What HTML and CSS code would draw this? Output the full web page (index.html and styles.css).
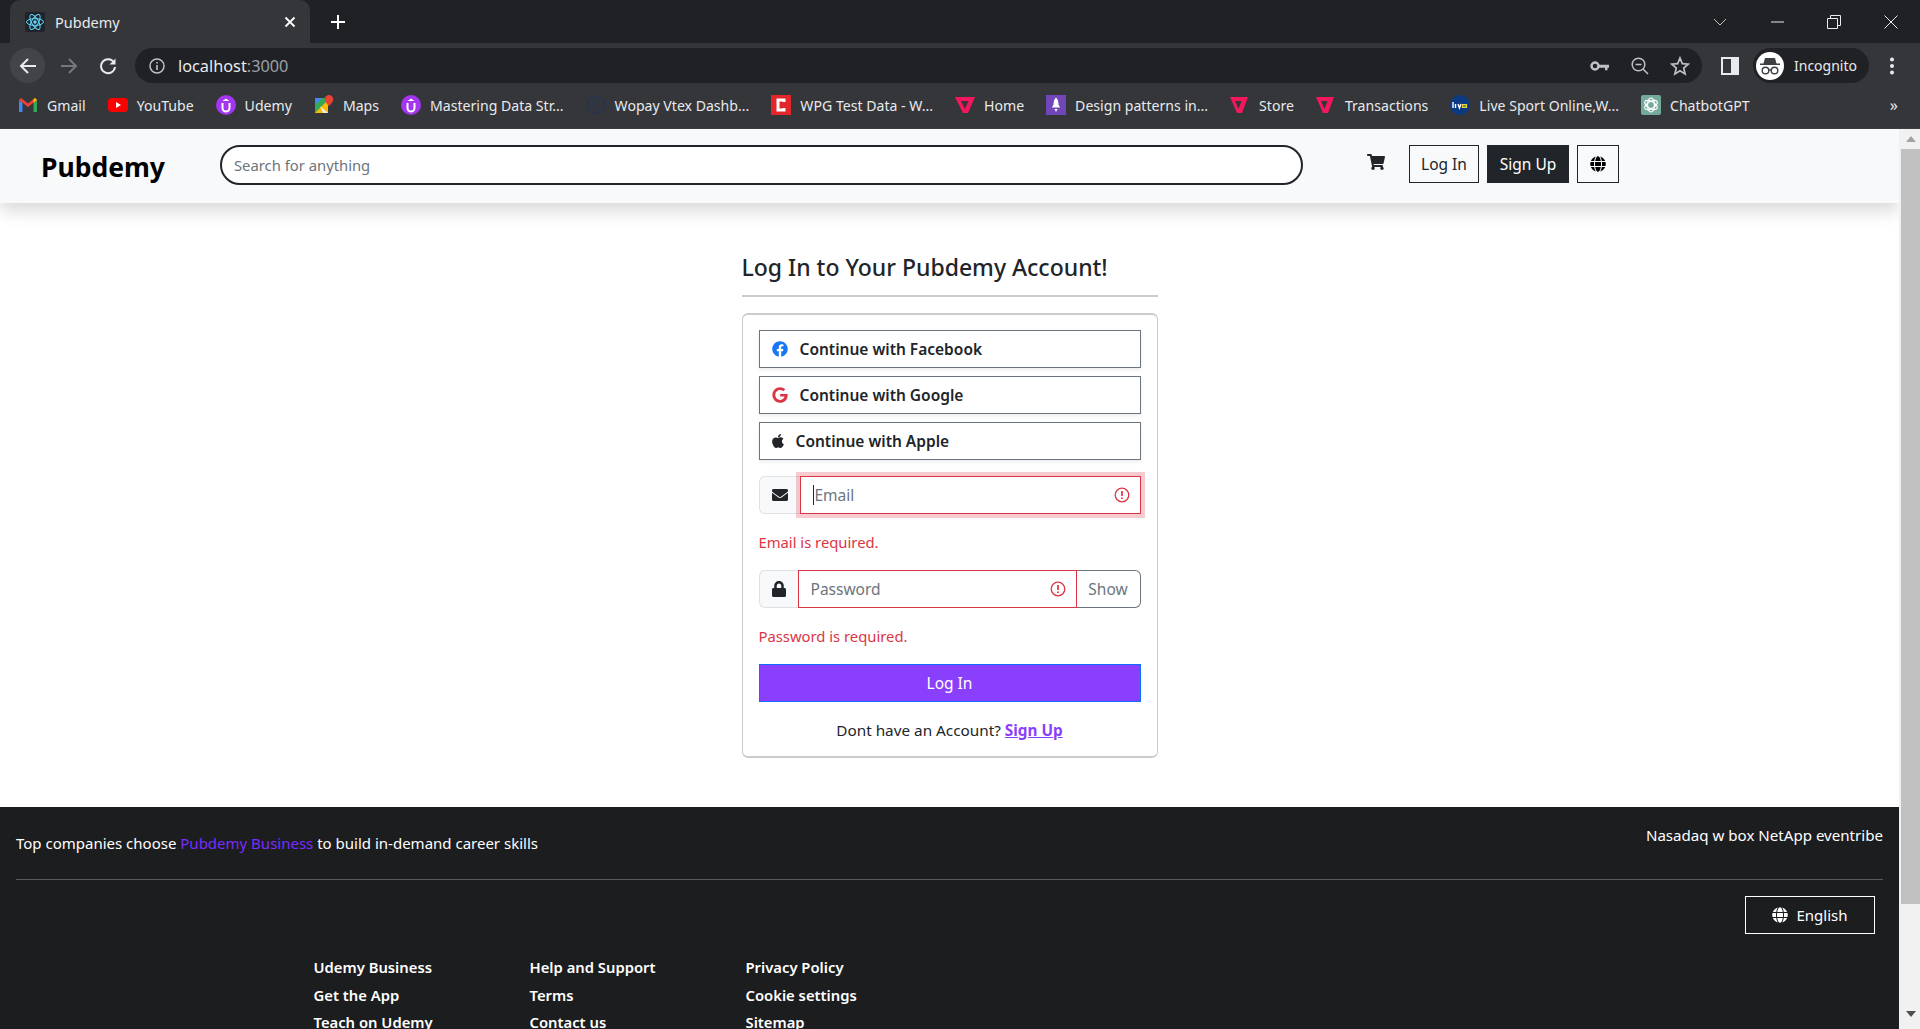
FILE: index.html
```html
<!doctype html>
<html>
  <head>
    <meta charset="UTF-8">
    <title>Pubdemy</title>
    <link rel="stylesheet" href="styles.css">
  </head>
  <body>
    <div class="tabstrip">
      <div class="tab">
        <span class="favicon">
          <svg viewBox="0 0 20 20" width="20" height="20"><rect width="20" height="20" rx="2" fill="#20232a"/><g fill="none" stroke="#61dafb" stroke-width="1"><ellipse cx="10" cy="10" rx="8.5" ry="3.4"/><ellipse cx="10" cy="10" rx="8.5" ry="3.4" transform="rotate(60 10 10)"/><ellipse cx="10" cy="10" rx="8.5" ry="3.4" transform="rotate(120 10 10)"/></g><circle cx="10" cy="10" r="1.7" fill="#61dafb"/></svg>
        </span>
        <span class="tab-title">Pubdemy</span>
        <svg class="tab-close" viewBox="0 0 12 12" width="12" height="12"><path d="M1.5 1.5l9 9M10.5 1.5l-9 9" stroke="#fff" stroke-width="1.8"/></svg>
      </div>
      <svg class="new-tab" viewBox="0 0 16 16" width="16" height="16"><path d="M8 1v14M1 8h14" stroke="#fff" stroke-width="2"/></svg>
      <div class="window-btns">
        <svg viewBox="0 0 14 14" width="14" height="14"><path d="M1 4l6 6 6-6" fill="none" stroke="#c4c7c5" stroke-width="1"/></svg>
        <svg viewBox="0 0 14 14" width="14" height="14"><path d="M1 7h13" stroke="#e8eaed" stroke-width="1"/></svg>
        <svg viewBox="0 0 14 14" width="14" height="14"><path d="M.5 3.5h10v10H.5zM3.500 3.500V.5h10v10h-3" fill="none" stroke="#e8eaed" stroke-width="1"/></svg>
        <svg viewBox="0 0 14 14" width="14" height="14"><path d="M.5.5l13 13M13.500.5l-13 13" stroke="#e8eaed" stroke-width="1"/></svg>
      </div>
    </div>

    <div class="toolbar">
      <span class="nav-btn back">
        <svg viewBox="0 0 18 18" width="18" height="18"><path d="M17 9H2.500M9 2L2 9l7 7" fill="none" stroke="#e8eaed" stroke-width="2"/></svg>
      </span>
      <span class="nav-btn">
        <svg viewBox="0 0 18 18" width="18" height="18"><path d="M1 9h14.500M9 2l7 7-7 7" fill="none" stroke="#75777a" stroke-width="2"/></svg>
      </span>
      <span class="nav-btn">
        <svg viewBox="0 0 18 18" width="18" height="18"><path d="M15.300 6A7 7 0 1 0 16 10" fill="none" stroke="#e8eaed" stroke-width="2"/><path d="M16.500 1.500v6h-6z" fill="#e8eaed"/></svg>
      </span>
      <div class="address">
        <svg class="addr-info" viewBox="0 0 16 16" width="16" height="16"><circle cx="8" cy="8" r="7" fill="none" stroke="#bdc1c6" stroke-width="1.500"/><path d="M8 7v5M8 4v1.600" stroke="#bdc1c6" stroke-width="1.600"/></svg>
        <span class="url">localhost<span class="url-port">:3000</span></span>
        <div class="addr-tools">
          <svg viewBox="0 0 20 12" width="20" height="12"><circle cx="5" cy="6" r="3.500" fill="none" stroke="#bdc1c6" stroke-width="2.500"/><path d="M8 4.700h11v3h-1.500v2.500h-2.500V7.700h-7z" fill="#bdc1c6"/></svg>
          <svg viewBox="0 0 18 18" width="18" height="18"><circle cx="7.500" cy="7.500" r="6.300" fill="none" stroke="#bdc1c6" stroke-width="1.500"/><path d="M4.500 7.500h6M12 12l5 5" stroke="#bdc1c6" stroke-width="1.500"/></svg>
          <svg viewBox="0 0 20 20" width="20" height="20"><path d="M10 2l2.300 5.600 6 .5-4.600 3.900 1.400 5.900L10 14.800l-5.100 3.100 1.400-5.900L1.700 8.100l6-.5z" fill="none" stroke="#bdc1c6" stroke-width="1.700"/></svg>
        </div>
      </div>
      <svg class="side-panel" viewBox="0 0 18 18" width="18" height="18"><path fill="#e8eaed" fill-rule="evenodd" d="M0 0h18v18H0zM2 2v14h8V2z"/></svg>
      <div class="profile">
        <span class="avatar">
          <svg viewBox="0 0 28 28" width="28" height="28"><circle cx="14" cy="14" r="14" fill="#fff"/><path d="M9 6h10l1.500 5.500H24V13H4v-1.500h3.500z" fill="#3c4043"/><g fill="none" stroke="#3c4043" stroke-width="1.400"><circle cx="9.500" cy="18.500" r="3.300"/><circle cx="18.500" cy="18.500" r="3.300"/><path d="M12.800 18h2.400"/></g></svg>
        </span>
        <span class="profile-name">Incognito</span>
      </div>
      <svg class="menu-dots" viewBox="0 0 4 18" width="4" height="18"><circle cx="2" cy="2.500" r="2" fill="#e8eaed"/><circle cx="2" cy="9" r="2" fill="#e8eaed"/><circle cx="2" cy="15.500" r="2" fill="#e8eaed"/></svg>
    </div>

    <div class="bookmarks">
      <span class="bm">
        <svg viewBox="0 0 20 20" width="20" height="20"><path d="M1 5v12h3.500V8z" fill="#4285f4"/><path d="M19 5v12h-3.500V8z" fill="#34a853"/><path d="M1 5l9 7 9-7-2-2-7 5.500L3 3z" fill="#ea4335"/><path d="M15.500 8L19 5l-2-2-1.500 1.200z" fill="#fbbc04"/></svg>
        Gmail
      </span>
      <span class="bm">
        <svg viewBox="0 0 20 20" width="20" height="20"><rect y="3" width="20" height="14" rx="4" fill="#f00"/><path d="M8 7l5 3-5 3z" fill="#fff"/></svg>
        YouTube
      </span>
      <span class="bm">
        <svg viewBox="0 0 20 20" width="20" height="20"><circle cx="10" cy="10" r="10" fill="#a435f0"/><path d="M6.500 8v5a3.500 3.500 0 0 0 7 0V8" fill="none" stroke="#fff" stroke-width="2"/><path d="M10 3.500L6.500 6h7z" fill="#fff"/></svg>
        Udemy
      </span>
      <span class="bm">
        <svg viewBox="0 0 20 20" width="20" height="20"><path d="M1 3h13v15H1z" fill="#34a853"/><path d="M1 18L14 5v13z" fill="#fbbc04"/><path d="M1 3h7L1 10z" fill="#4285f4"/><path d="M6 11l8 7H9z" fill="#e8eaed"/><path d="M15 0a4.200 4.200 0 0 0-4.200 4.200C10.800 7 15 11 15 11s4.200-4 4.200-6.800A4.200 4.200 0 0 0 15 0z" fill="#ea4335"/></svg>
        Maps
      </span>
      <span class="bm">
        <svg viewBox="0 0 20 20" width="20" height="20"><circle cx="10" cy="10" r="10" fill="#a435f0"/><path d="M6.500 8v5a3.500 3.500 0 0 0 7 0V8" fill="none" stroke="#fff" stroke-width="2"/><path d="M10 3.500L6.500 6h7z" fill="#fff"/></svg>
        Mastering Data Str...
      </span>
      <span class="bm">
        <svg viewBox="0 0 20 20" width="20" height="20"><path d="M10 1l8 4.500v9L10 19l-8-4.500v-9z" fill="none" stroke="#27344f" stroke-width="1.500"/><path d="M13 7a4 4 0 1 0 0 6" fill="none" stroke="#27344f" stroke-width="1.500"/></svg>
        Wopay Vtex Dashb...
      </span>
      <span class="bm">
        <svg viewBox="0 0 20 20" width="20" height="20"><rect width="20" height="20" fill="#e2262b"/><path d="M13 7V5h-6v10h6v-2" fill="none" stroke="#fff" stroke-width="3"/></svg>
        WPG Test Data - W...
      </span>
      <span class="bm">
        <svg viewBox="0 0 20 20" width="20" height="20"><path d="M0 2h20l-7 16H8zM6 6l4 8 3.500-8z" fill="#f5175e" fill-rule="evenodd"/></svg>
        Home
      </span>
      <span class="bm">
        <svg viewBox="0 0 20 20" width="20" height="20"><rect width="20" height="20" fill="#7046b8"/><path d="M10 2.500c2 2 2.500 4.500 2.500 7l1.500 3H6l1.500-3c0-2.500.5-5 2.500-7z" fill="#fff"/><path d="M8.500 14h3L10 17z" fill="#fff"/></svg>
        Design patterns in...
      </span>
      <span class="bm">
        <svg viewBox="0 0 20 20" width="20" height="20"><path d="M0 2h18l-6 16H7zM5 6l3.500 8 3-8z" fill="#f5175e" fill-rule="evenodd"/></svg>
        Store
      </span>
      <span class="bm">
        <svg viewBox="0 0 20 20" width="20" height="20"><path d="M0 2h18l-6 16H7zM5 6l3.500 8 3-8z" fill="#f5175e" fill-rule="evenodd"/></svg>
        Transactions
      </span>
      <span class="bm">
        <svg viewBox="0 0 20 20" width="20" height="20"><circle cx="10" cy="10" r="10" fill="#0b3a82"/><path d="M3 7v6M5.500 9v4M8 9l1.500 4L11 9" fill="none" stroke="#fff" stroke-width="1.400"/><path d="M12.500 11h4.500M12.500 9.500h4v3h-4z" fill="none" stroke="#e6d23a" stroke-width="1.200"/></svg>
        Live Sport Online,W...
      </span>
      <span class="bm">
        <svg viewBox="0 0 20 20" width="20" height="20"><rect width="20" height="20" rx="2" fill="#74aa9c"/><g fill="none" stroke="#fff" stroke-width="1.200"><ellipse cx="10" cy="10" rx="7" ry="3.500" transform="rotate(30 10 10)"/><ellipse cx="10" cy="10" rx="7" ry="3.500" transform="rotate(90 10 10)"/><ellipse cx="10" cy="10" rx="7" ry="3.500" transform="rotate(150 10 10)"/></g></svg>
        ChatbotGPT
      </span>
      <span class="bm-more">»</span>
    </div>

    <div class="page">
      <div class="main">
        <nav class="navbar">
          <a class="brand">Pubdemy</a>
          <input class="search" placeholder="Search for anything">
          <svg class="cart" viewBox="0 0 576 512" width="18" height="16"><path d="M528.12 301.319l47.273-208C578.806 78.301 567.391 64 551.99 64H159.208l-9.166-44.81C147.758 8.021 137.93 0 126.529 0H24C10.745 0 0 10.745 0 24v16c0 13.255 10.745 24 24 24h69.883l70.248 343.435C147.325 417.1 136 435.222 136 456c0 30.928 25.072 56 56 56s56-25.072 56-56c0-15.674-6.447-29.835-16.824-40h209.647C430.447 426.165 424 440.326 424 456c0 30.928 25.072 56 56 56s56-25.072 56-56c0-22.172-12.888-41.332-31.579-50.405l5.517-24.276c3.413-15.018-8.002-29.319-23.403-29.319H218.117l-6.545-32h293.145c11.206 0 20.92-7.754 23.403-18.681z"/></svg>
          <button class="nav-login">Log In</button>
          <button class="nav-signup">Sign Up</button>
          <button class="nav-globe">
            <svg viewBox="0 0 496 512" width="16" height="16"><path d="M336.5 160C322 70.7 287.8 8 248 8s-74 62.7-88.5 152h177zM152 256c0 22.2 1.2 43.5 3.3 64h185.3c2.1-20.5 3.3-41.8 3.3-64s-1.2-43.5-3.3-64H155.3c-2.1 20.5-3.3 41.8-3.3 64zm324.7-96c-28.6-67.9-86.5-120.4-158-141.6 24.4 33.8 41.2 84.7 50 141.6h108zM177.2 18.4C105.8 39.6 47.8 92.1 19.3 160h108c8.7-56.9 25.5-107.8 49.9-141.6zM487.4 192H372.7c2.1 21 3.3 42.5 3.3 64s-1.2 43-3.3 64h114.6c5.500-20.5 8.6-41.8 8.6-64s-3.1-43.5-8.5-64zM120 256c0-21.5 1.2-43 3.3-64H8.6C3.2 212.5 0 233.8 0 256s3.2 43.5 8.6 64h114.6c-2-21-3.2-42.5-3.2-64zm39.5 96c14.5 89.3 48.7 152 88.5 152s74-62.7 88.5-152h-177zm159.3 141.6c71.4-21.2 129.4-73.7 158-141.6h-108c-8.8 56.9-25.6 107.8-50 141.6zM19.3 352c28.6 67.9 86.5 120.4 158 141.6-24.4-33.8-41.2-84.7-50-141.6h-108z"/></svg>
          </button>
        </nav>

        <section class="login">
          <h4 class="login-title">Log In to Your Pubdemy Account!</h4>
          <div class="login-rule"></div>
          <div class="login-card">
            <button class="social">
              <svg viewBox="0 0 512 512" width="16" height="16"><path fill="#1877f2" d="M504 256C504 119 393 8 256 8S8 119 8 256c0 123.78 90.69 226.38 209.25 245V327.69h-63V256h63v-54.64c0-62.15 37-96.48 93.67-96.48 27.14 0 55.52 4.84 55.52 4.84v61h-31.28c-30.8 0-40.41 19.12-40.41 38.73V256h68.78l-11 71.69h-57.78V501C413.31 482.38 504 379.78 504 256z"/></svg>
              Continue with Facebook
            </button>
            <button class="social">
              <svg viewBox="0 0 488 512" width="16" height="16"><path fill="#dc3545" d="M488 261.8C488 403.3 391.1 504 248 504 110.8 504 0 393.2 0 256S110.8 8 248 8c66.8 0 123 24.5 166.3 64.9l-67.5 64.9C258.5 52.6 94.3 116.6 94.3 256c0 86.5 69.1 156.6 153.7 156.6 98.2 0 135-70.4 140.8-106.9H248v-85.3h236.1c2.3 12.7 3.9 24.9 3.9 41.4z"/></svg>
              Continue with Google
            </button>
            <button class="social">
              <svg viewBox="0 0 384 512" width="12" height="16"><path fill="#212529" d="M318.7 268.7c-.2-36.7 16.4-64.4 50-84.8-18.8-26.9-47.2-41.7-84.7-44.6-35.5-2.8-74.3 20.7-88.5 20.7-15 0-49.4-19.7-76.4-19.7C63.3 141.2 4 184.8 4 273.5q0 39.3 14.4 81.2c12.8 36.7 59 126.7 107.2 125.2 25.2-.6 43-17.9 75.8-17.9 31.8 0 48.3 17.9 76.4 17.9 48.6-.7 90.4-82.5 102.6-119.3-65.2-30.7-61.7-90-61.7-91.9zm-56.6-164.2c27.3-32.4 24.8-61.9 24-72.5-24.1 1.4-52 16.4-67.9 34.9-17.5 19.8-27.8 44.3-25.6 71.9 26.1 2 49.9-11.4 69.5-34.3z"/></svg>
              Continue with Apple
            </button>

            <div class="field field-email">
              <span class="field-icon email-icon">
                <svg viewBox="0 0 512 512" width="16" height="16"><path fill="#212529" d="M502.3 190.8c3.9-3.1 9.7-.2 9.7 4.7V400c0 26.5-21.5 48-48 48H48c-26.5 0-48-21.5-48-48V195.6c0-5 5.7-7.8 9.7-4.7 22.4 17.4 52.1 39.5 154.1 113.6 21.1 15.4 56.7 47.8 92.2 47.6 35.7.3 72-32.8 92.3-47.6 102-74.1 131.6-96.3 154-113.7zM256 320c23.2.4 56.6-29.2 73.4-41.4 132.7-96.3 142.8-104.7 173.4-128.7 5.8-4.5 9.2-11.5 9.2-18.9v-19c0-26.5-21.5-48-48-48H48C21.5 64 0 85.5 0 112v19c0 7.4 3.4 14.3 9.2 18.9 30.6 23.9 40.7 32.4 173.4 128.7 16.8 12.2 50.2 41.800 73.4 41.4z"/></svg>
              </span>
              <div class="field-input email-input">
                <span class="caret"></span>
                <span class="placeholder">Email</span>
                <svg class="alert" viewBox="0 0 16 16" width="16" height="16"><circle cx="8" cy="8" r="6.800" fill="none" stroke="#dc3545" stroke-width="1.300"/><path d="M8 4v5M8 10.500v1.600" stroke="#dc3545" stroke-width="1.700"/></svg>
              </div>
            </div>
            <p class="error">Email is required.</p>

            <div class="field">
              <span class="field-icon">
                <svg viewBox="0 0 448 512" width="14" height="16"><path fill="#212529" d="M400 224h-24v-72C376 68.2 307.8 0 224 0S72 68.2 72 152v72H48c-26.5 0-48 21.5-48 48v192c0 26.5 21.5 48 48 48h352c26.5 0 48-21.5 48-48V272c0-26.5-21.5-48-48-48zm-104 0H152v-72c0-39.7 32.3-72 72-72s72 32.3 72 72v72z"/></svg>
              </span>
              <div class="field-input">
                <span class="placeholder">Password</span>
                <svg class="alert" viewBox="0 0 16 16" width="16" height="16"><circle cx="8" cy="8" r="6.800" fill="none" stroke="#dc3545" stroke-width="1.300"/><path d="M8 4v5M8 10.500v1.600" stroke="#dc3545" stroke-width="1.700"/></svg>
              </div>
              <button class="show-btn">Show</button>
            </div>
            <p class="error">Password is required.</p>

            <button class="submit">Log In</button>
            <p class="signup-line">Dont have an Account? <a class="signup-link">Sign Up</a></p>
          </div>
        </section>

        <footer class="footer">
          <div class="footer-top">
            <p class="footer-tag">Top companies choose <span class="footer-brand">Pubdemy Business</span> to build in-demand career skills</p>
            <p class="footer-logos">Nasadaq w box NetApp eventribe</p>
          </div>
          <div class="footer-rule"></div>
          <div class="footer-lang-row">
            <button class="lang-btn">
              <svg viewBox="0 0 496 512" width="16" height="16"><path fill="#fff" d="M336.5 160C322 70.7 287.8 8 248 8s-74 62.7-88.5 152h177zM152 256c0 22.2 1.2 43.5 3.3 64h185.3c2.1-20.5 3.3-41.8 3.3-64s-1.2-43.5-3.3-64H155.3c-2.1 20.5-3.3 41.8-3.3 64zm324.7-96c-28.6-67.9-86.5-120.4-158-141.6 24.4 33.8 41.2 84.7 50 141.6h108zM177.2 18.4C105.8 39.6 47.8 92.1 19.3 160h108c8.7-56.9 25.5-107.8 49.9-141.6zM487.4 192H372.7c2.1 21 3.3 42.5 3.3 64s-1.2 43-3.3 64h114.6c5.500-20.5 8.6-41.8 8.6-64s-3.1-43.5-8.5-64zM120 256c0-21.5 1.2-43 3.3-64H8.6C3.2 212.5 0 233.8 0 256s3.2 43.5 8.6 64h114.6c-2-21-3.2-42.5-3.2-64zm39.5 96c14.5 89.3 48.7 152 88.5 152s74-62.7 88.5-152h-177zm159.3 141.6c71.4-21.2 129.4-73.7 158-141.6h-108c-8.8 56.9-25.6 107.8-50 141.6zM19.3 352c28.6 67.9 86.5 120.4 158 141.6-24.4-33.8-41.2-84.7-50-141.6h-108z"/></svg>
              English
            </button>
          </div>
          <div class="footer-links">
            <ul>
              <li>Udemy Business</li>
              <li>Get the App</li>
              <li>Teach on Udemy</li>
            </ul>
            <ul>
              <li>Help and Support</li>
              <li>Terms</li>
              <li>Contact us</li>
            </ul>
            <ul>
              <li>Privacy Policy</li>
              <li>Cookie settings</li>
              <li>Sitemap</li>
            </ul>
          </div>
        </footer>
      </div>

      <div class="scrollbar">
        <span class="arrow-up"></span>
        <span class="thumb"></span>
        <span class="arrow-down"></span>
      </div>
    </div>
  </body>
</html>
```

FILE: styles.css
```css
*{
  margin:0;
  padding:0;
  box-sizing:border-box;
}
html,body{
  height:1029px;
  overflow:hidden;
}
body{
  font-family:"Noto Sans","Open Sans",sans-serif;
  font-size:15px;
  color:#212529;
  background:#fff;
  display:flex;
  flex-direction:column;
}
button{
  font-family:inherit;
  cursor:pointer;
}

/* browser chrome */
.tabstrip{
  height:43px;
  background:#202124;
  display:flex;
  align-items:center;
  padding-left:10px;
  flex:none;
}
.tab{
  width:300px;
  height:43px;
  background:#35363a;
  border-radius:10px 10px 0 0;
  display:flex;
  align-items:center;
  padding:0 14px 0 15px;
  color:#e8eaed;
  font-size:14.5px;
}
.favicon{
  width:20px;
  height:20px;
  margin-right:10px;
}
.favicon svg,.bm svg,.avatar svg{
  display:block;
}
.tab-title{
  flex:1;
}
.new-tab{
  margin-left:20px;
}
.window-btns{
  margin-left:auto;
  width:185px;
  display:flex;
  justify-content:space-between;
  margin-right:22px;
}
.toolbar{
  height:40px;
  background:#35363a;
  padding:5px 0 0 10px;
  display:flex;
  align-items:center;
  flex:none;
}
.nav-btn{
  width:35px;
  height:35px;
  border-radius:50%;
  margin-right:4px;
  display:flex;
  align-items:center;
  justify-content:center;
}
.back{
  background:#434448;
  margin-right:6px;
}
.address{
  width:1567px;
  height:35px;
  margin-left:6px;
  background:#202124;
  border-radius:18px;
  display:flex;
  align-items:center;
  padding:0 12px 0 14px;
}
.url{
  margin-left:13px;
  color:#e8eaed;
  font-size:16.3px;
}
.url-port{
  color:#9aa0a6;
}
.addr-tools{
  margin-left:auto;
  width:100px;
  display:flex;
  align-items:center;
  justify-content:space-between;
}
.side-panel{
  margin-left:19px;
}
.profile{
  width:116px;
  height:35px;
  margin-left:14px;
  background:#202124;
  border-radius:18px;
  display:flex;
  align-items:center;
  padding-left:3px;
  color:#e8eaed;
  font-size:14px;
}
.avatar{
  width:28px;
  height:28px;
}
.profile-name{
  margin-left:10px;
}
.menu-dots{
  margin-left:21px;
}
.bookmarks{
  height:46px;
  background:#35363a;
  border-bottom:1px solid #3c3d41;
  display:flex;
  align-items:center;
  gap:22px;
  padding:0 0 1px 18px;
  color:#e8eaed;
  font-size:14.1px;
  white-space:nowrap;
  flex:none;
}
.bm{
  display:flex;
  align-items:center;
  gap:9px;
}
.bm-more{
  margin-left:auto;
  margin-right:22px;
  font-size:16px;
}

/* page */
.page{
  flex:1;
  display:flex;
  min-height:0;
}
.main{
  width:1899px;
  flex:none;
  overflow:hidden;
}
.scrollbar{
  width:21px;
  flex:none;
  background:#f1f1f1;
  padding-left:2px;
  display:flex;
  flex-direction:column;
  align-items:center;
}
.thumb{
  width:100%;
  height:755px;
  background:#c1c1c1;
  margin-top:7px;
}
.arrow-up{
  width:0;
  height:0;
  margin-top:7px;
  border:5px solid transparent;
  border-top:0;
  border-bottom:6px solid #a3a3a3;
}
.arrow-down{
  width:0;
  height:0;
  margin-top:107px;
  border:5px solid transparent;
  border-bottom:0;
  border-top:6px solid #505050;
}

/* navbar */
.navbar{
  height:74px;
  background:#f8f9fa;
  box-shadow:0 8px 16px rgba(0,0,0,.15);
  display:flex;
  align-items:flex-start;
  padding:16px 0 0 41px;
  position:relative;
}
.brand{
  width:124px;
  margin:2px 55px 0 0;
  font-size:26.5px;
  font-weight:700;
  line-height:40px;
  color:#000;
}
.search{
  width:1083px;
  height:40px;
  border:2px solid #212529;
  border-radius:20px;
  padding:0 12px;
  font:14.8px "Noto Sans",sans-serif;
  outline:none;
}
.search::placeholder{
  color:#6c757d;
}
.cart{
  margin:9px 24px 0 64px;
  fill:#212529;
}
.nav-login,.nav-signup,.nav-globe{
  height:38px;
  border:1px solid #212529;
  font-size:15.5px;
  display:flex;
  align-items:center;
  justify-content:center;
}
.nav-login{
  width:70px;
  background:transparent;
  color:#212529;
}
.nav-signup{
  width:82px;
  margin:0 8px;
  background:#212529;
  color:#fff;
}
.nav-globe{
  width:42px;
  background:transparent;
}

/* login card */
.login{
  width:416px;
  margin:0 auto;
  padding-top:48px;
}
.login-title{
  font-size:23px;
  font-weight:500;
  line-height:32px;
  color:#212529;
}
.login-rule{
  height:2px;
  margin-top:12px;
  background:#ccc;
}
.login-card{
  height:445px;
  margin-top:16px;
  border:1px solid #ccc;
  border-width:2px 1.5px;
  border-radius:6px;
  padding:15px 16px 0;
}
.social{
  width:382px;
  height:38px;
  margin-bottom:8px;
  display:flex;
  align-items:center;
  gap:12px;
  padding-left:12px;
  background:#fff;
  border:1px solid #6c757d;
  box-shadow:0 2px 4px rgba(0,0,0,.075);
  color:#212529;
  font-size:15.5px;
  font-weight:600;
}
.field{
  width:382px;
  height:38px;
  display:flex;
}
.field-email{
  margin-top:16px;
}
.field-icon{
  width:39px;
  background:#f8f9fa;
  border:1px solid #dee2e6;
  border-right:0;
  border-radius:6px 0 0 6px;
  display:flex;
  align-items:center;
  justify-content:center;
}
.email-icon{
  width:41px;
}
.field-input{
  flex:1;
  display:flex;
  align-items:center;
  padding:0 10px 0 12px;
  border:1px solid #dc3545;
  font-size:15.5px;
  color:#6c757d;
}
.email-input{
  box-shadow:0 0 0 4px rgba(220,53,69,.25);
}
.caret{
  width:1px;
  height:20px;
  background:#212529;
  margin-right:1px;
}
.alert{
  margin-left:auto;
}
.show-btn{
  width:64px;
  background:#fff;
  border:1px solid #6c757d;
  border-left:0;
  border-radius:0 6px 6px 0;
  color:#6c757d;
  font-size:15.5px;
}
.error{
  margin:17px 0;
  color:#dc3545;
  font-size:14.8px;
  line-height:22px;
}
.submit{
  width:382px;
  height:38px;
  background:#8a3ffc;
  border:1px solid #0d6efd;
  color:#fff;
  font-size:15.5px;
}
.signup-line{
  margin-top:16px;
  line-height:24px;
  text-align:center;
  font-size:15.3px;
}
.signup-link{
  color:#8a3ffc;
  font-weight:700;
  text-decoration:underline;
}

/* footer */
.footer{
  height:222px;
  margin-top:49px;
  background:#1c1d1f;
  color:#fff;
  padding:0 16px;
  font-size:15px;
}
.footer-top{
  height:72px;
  display:flex;
  justify-content:space-between;
}
.footer-tag{
  margin-top:25px;
  line-height:22px;
}
.footer-logos{
  margin-top:17px;
  line-height:22px;
  font-size:15.1px;
}
.footer-brand{
  color:#7a2bff;
}
.footer-rule{
  height:1px;
  background:#5a5b5d;
}
.footer-lang-row{
  display:flex;
  justify-content:flex-end;
  padding:16px 8px 0 0;
}
.lang-btn{
  width:130px;
  height:38px;
  display:flex;
  align-items:center;
  justify-content:center;
  gap:8px;
  background:transparent;
  border:1px solid #fff;
  color:#fff;
  font-size:15px;
}
.footer-links{
  display:flex;
  padding:20px 0 0 297.5px;
}
.footer-links ul{
  width:216px;
  list-style:none;
}
.footer-links li{
  line-height:27.5px;
  font-weight:600;
  font-size:14.8px;
}
```
